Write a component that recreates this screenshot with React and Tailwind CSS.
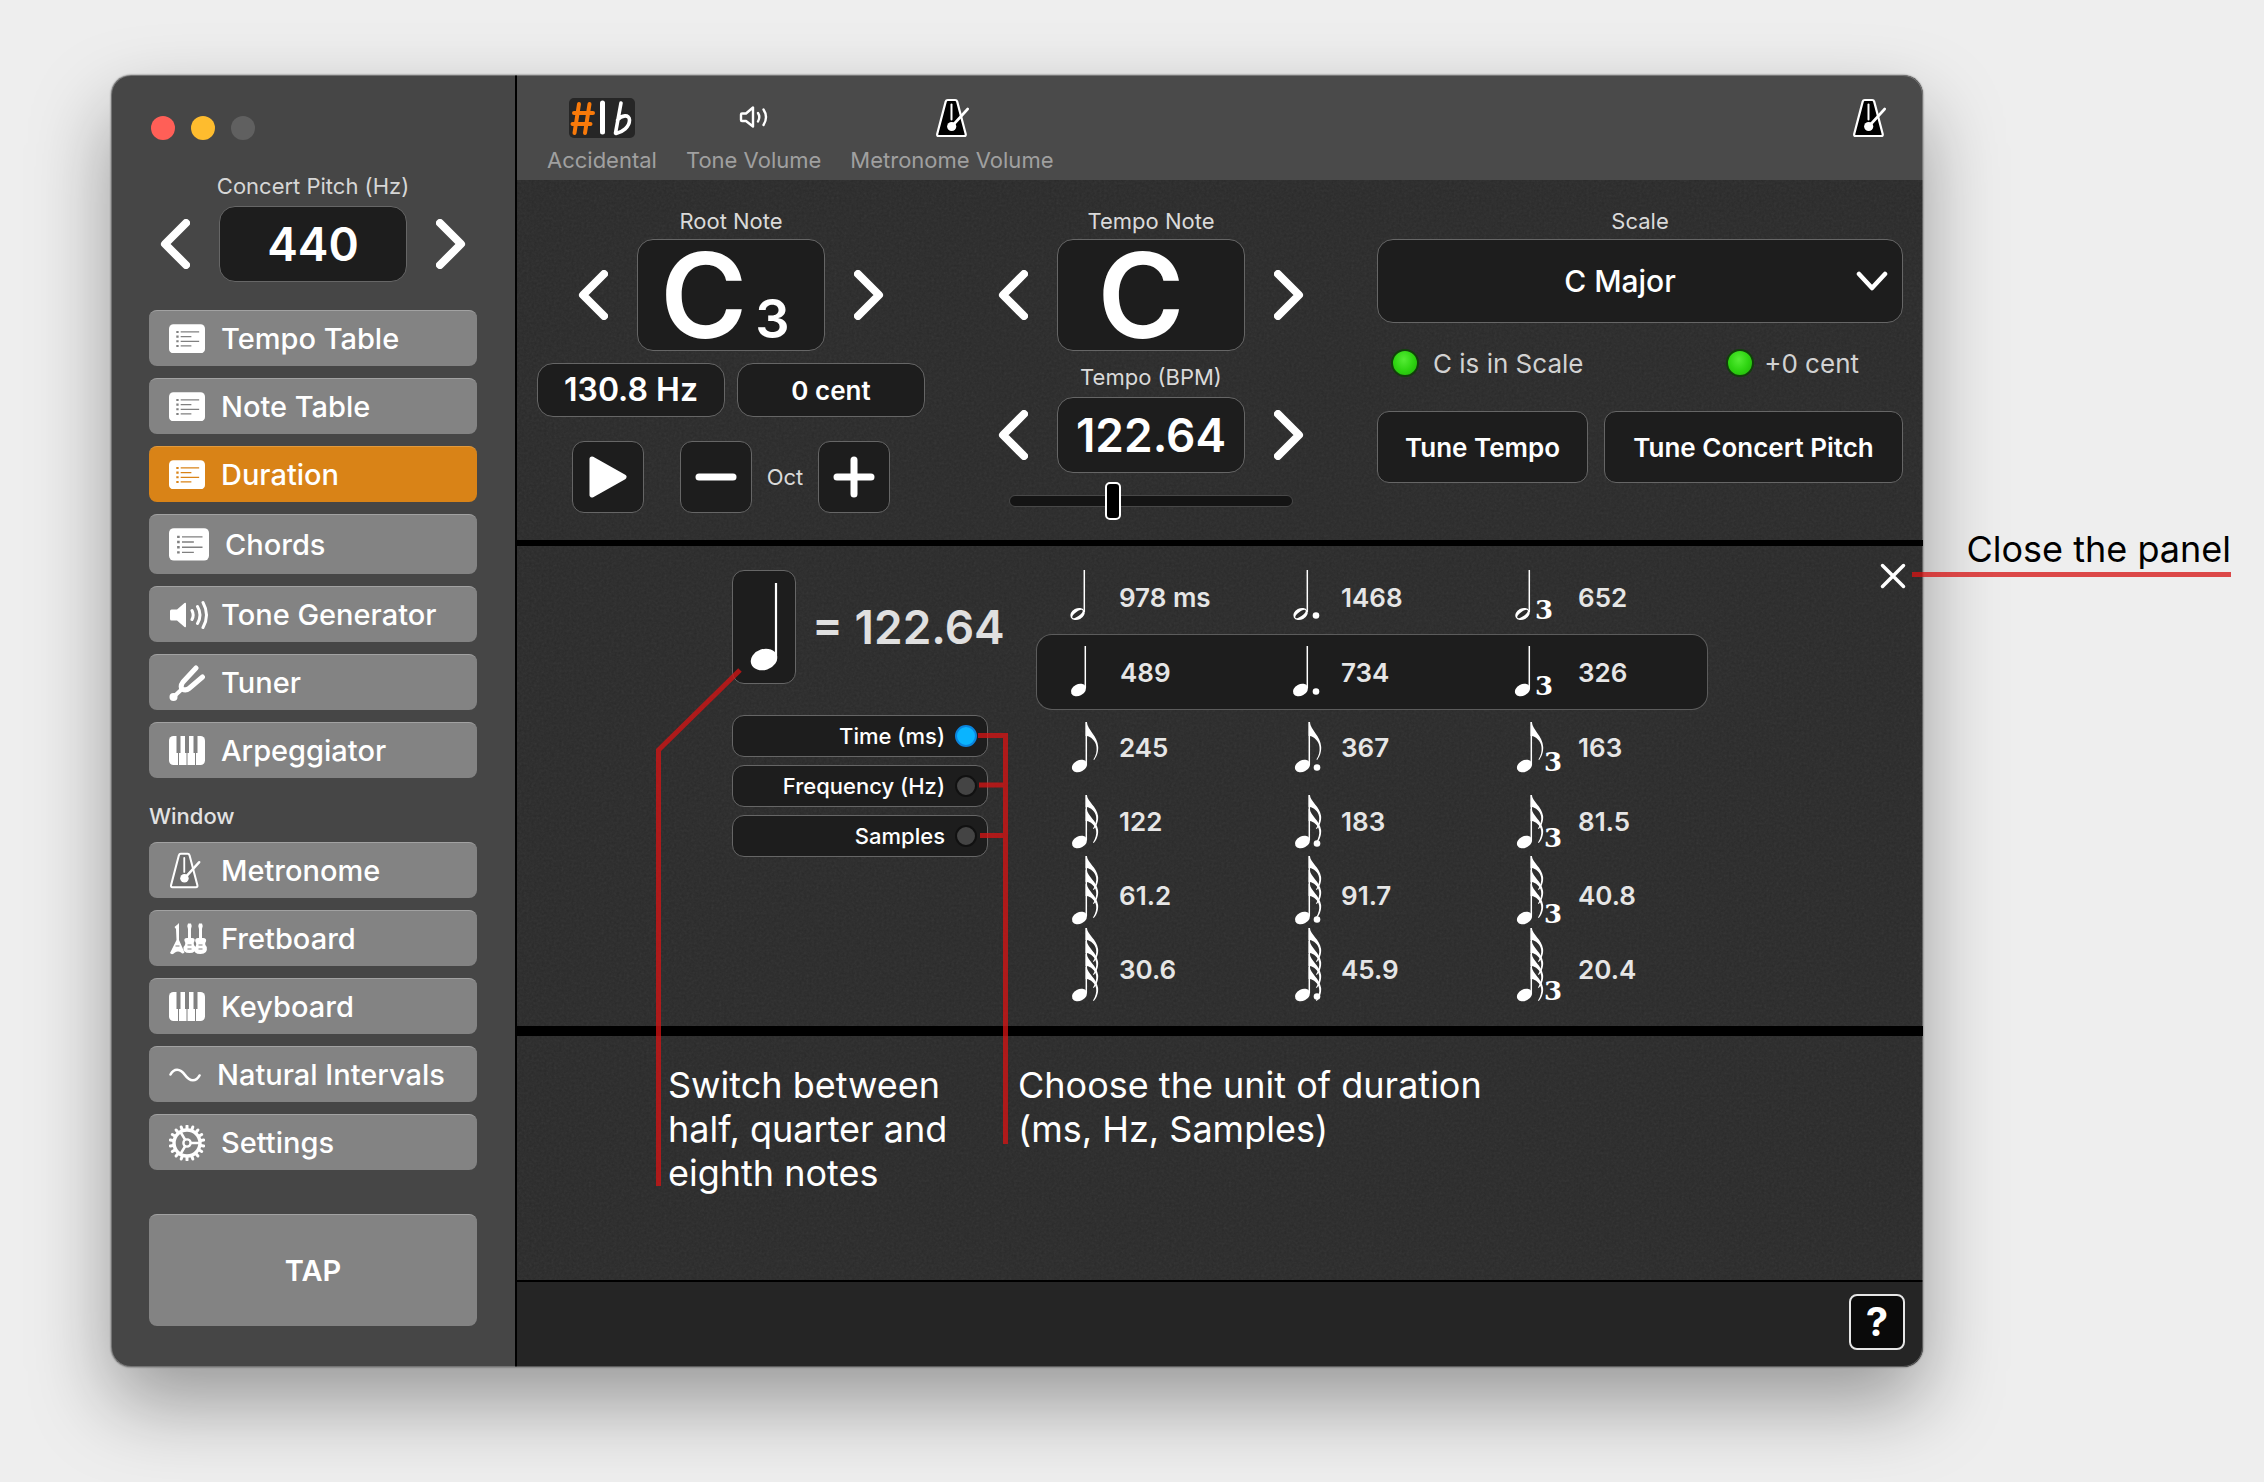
import { useState } from 'react';

const BOX = 'border border-[#666] bg-[#1d1d1d] text-white';

function Chevron({ dir, label }) {
  return (
    <button aria-label={label} className="shrink-0">
      <svg width="30" height="50" viewBox="0 0 30 50" fill="none" stroke="#fff" strokeWidth="8" strokeLinecap="round" strokeLinejoin="round">
        <path d={dir === 'left' ? 'M26 4 5 25 26 46' : 'M4 4 25 25 4 46'} />
      </svg>
    </button>
  );
}

function ListIcon({ size = 36, line = '#808080' }) {
  return (
    <svg width={size} height={size * 0.82} viewBox="0 0 37 30" fill="none">
      <rect width="37" height="30" rx="4.5" fill="#fff" />
      <g stroke={line} strokeWidth="1.3">
        <path d="M12 8h19M12 12.8h11M12 17.6h19M12 22.4h11" />
        <path strokeWidth="2.2" d="M7.5 8h2.4M7.5 12.8h2.4M7.5 17.6h2.4M7.5 22.4h2.4" />
      </g>
    </svg>
  );
}

function SpeakerIcon() {
  return (
    <svg width="40" height="30" viewBox="0 0 40 30" fill="none" stroke="#fff" strokeWidth="3" strokeLinecap="round">
      <path d="M1 11q0-1.500 1.500-1.500H8L15.500 3q1.500-1 1.500.8v22.400q0 1.800-1.500.8L8 20.500H2.500Q1 20.500 1 19Z" fill="#fff" stroke="none" />
      <path d="M23 10.500q2.400 4.500 0 9M28.500 6.500q5 8.500 0 17M34 2.500q7 12.500 0 25" />
    </svg>
  );
}

function ForkIcon() {
  return (
    <svg width="36" height="38" viewBox="0 0 36 38" fill="none" stroke="#fff" strokeWidth="5" strokeLinecap="round" strokeLinejoin="round">
      <path d="M27 4 14 18q-3 4-1 7 4 2 7-.5L33.500 13" />
      <path d="M12.500 25.500 5 32.500" strokeWidth="4" />
      <circle cx="4.500" cy="33" r="4" fill="#fff" stroke="none" />
    </svg>
  );
}

function PianoIcon() {
  return (
    <svg width="36" height="29" viewBox="0 0 36 29">
      <rect width="36" height="29" rx="4.500" fill="#fff" />
      <path d="M7.500 0h4v17h-4zM16 0h4v17h-4zM24.500 0h4v17h-4z" fill="#808080" />
      <path d="M9.500 16v13M18 16v13M26.500 16v13" stroke="#808080" strokeWidth="1" />
    </svg>
  );
}

function MetronomeIcon({ fill = '#000', size = 40 }) {
  return (
    <svg width={size * 0.86} height={size} viewBox="0 0 34 40" fill="none" stroke="#fff" strokeLinecap="round" strokeLinejoin="round">
      <path d="M12.500 2h7.500q1.500 0 2 1.600L30.500 36q.5 2-1.500 2H3.500q-2 0-1.500-2L10.500 3.600Q11 2 12.500 2Z" fill={fill} strokeWidth="2.200" />
      <path d="M16.300 6.500v15" strokeWidth="2" />
      <path d="M16.500 28.500 32.500 11" strokeWidth="2.600" />
      <circle cx="16.500" cy="28.500" r="4.600" fill="#fff" stroke="none" />
    </svg>
  );
}

function GuitarsIcon() {
  return (
    <svg width="40" height="32" viewBox="0 0 39 32" fill="#fff">
      <path d="M7 17 6.500 6 5 4 8 1.500 9.500 0v17l5.500 12.500q-2 2-3.500 0-3-2-6 0-3 3-5 .5Z" />
      <path d="M18.500 15V6q-1.500-3 0-5.500h3Q23 3 21.500 6v9q4.500-.5 3.500 3-2 3 1 6 1 6-6 6t-6-6q3-3 1-6-1-3.500 3.500-3Z" />
      <path d="M29.500 15V6Q28 3 29.500.5h3Q34 3 32.500 6v9q5-.5 4 3.500-2 2.500.8 5.500 1.200 7-6.300 7t-6-6q3-3.500.8-6.500Q25 14.500 29.500 15Z" />
      <path d="M6 23h4M18 22h4M29 22h4M18 26h4M29 26h4" stroke="#808080" strokeWidth="1.200" />
    </svg>
  );
}

function TildeIcon() {
  return (
    <svg width="32" height="20" viewBox="0 0 32 20" fill="none" stroke="#fff" strokeWidth="2.600" strokeLinecap="round">
      <path d="M1.500 9.500C5 3 11 3 16 10s11 7 14.500.5" />
    </svg>
  );
}

function GearIcon() {
  const teeth = Array.from({ length: 18 }, (_, i) => i * 20);
  return (
    <svg width="36" height="36" viewBox="-18 -18 36 36" fill="none" stroke="#fff">
      {teeth.map(a => <path key={a} d="M0-14v-3" strokeWidth="3" strokeLinecap="round" transform={`rotate(${a})`} />)}
      <circle r="13" strokeWidth="3.400" />
      <circle r="3.600" strokeWidth="2.400" />
      <path d="M3.600 0H12.500M-1.800-3.200-6.500-11M-1.800 3.200-6.500 11" strokeWidth="2.600" />
    </svg>
  );
}

function AccidentalIcon() {
  return (
    <svg width="66" height="40" viewBox="0 0 66 40" fill="none" strokeLinecap="round">
      <rect width="66" height="40" rx="5" fill="#262626" />
      <path d="M10 6 5.500 35M20.500 6 16 35M5 15h19M3.500 26h18" stroke="#f97a0a" strokeWidth="4" />
      <path d="M33.500 5v29" stroke="#fff" strokeWidth="5" />
      <path d="M52 5 46.500 35M48.500 22c4-5 12-6 12 0 0 7-7 12-13.500 13.500" stroke="#fff" strokeWidth="3.600" strokeLinejoin="round" />
    </svg>
  );
}

function NoteHead({ half }) {
  return half ? (
    <g transform="translate(7.500 -7) rotate(-28)">
      <ellipse rx="7.600" ry="5.600" fill="#fff" />
      <ellipse rx="6.300" ry="2.300" fill="#2d2d2d" transform="rotate(-8)" />
    </g>
  ) : <ellipse rx="8" ry="5.800" fill="#fff" transform="translate(7.500 -7) rotate(-28)" />;
}

// stem length by number of flags
const STEMS = [51, 51, 54, 69, 74];

// origin of the drawing is the lower left corner of the note head
function Note({ flags = 0, half, kind, drop }) {
  const stem = STEMS[flags];
  const gap = flags === 4 ? 13 : 14;
  return (
    <svg width="40" height="74" viewBox="0 0 40 74" className="overflow-visible">
      <g transform={`translate(${flags ? 2 : 0} ${37 + drop})`}>
        <NoteHead half={half} />
        <path d={`M14.300-9V-${stem}`} stroke="#fff" strokeWidth="1.500" />
        {flags === 1 && (
          <path transform={`translate(13.600 -${stem})`} fill="#fff" d="M0 0h1.200C2 8 12 14 12.600 25c.2 6-2 10-4 13l-.8-.5c2.600-4 3.600-8 3.100-12.500C10.500 19 5 14.500 1 14H0Z" />
        )}
        {flags > 1 && Array.from({ length: flags }, (_, i) => (
          <path key={i} transform={`translate(13.600 ${i * gap - stem})`} fill="#fff"
            d="M0 0h1.200C2 7 11 11 12.500 21c.5 5-1.500 10-4.300 13l-.8-.5c2.500-4 3.800-8.500 3.100-12C9.500 16 5 12.500 1 12H0Z" />
        ))}
        {kind === 'dot' && <circle cx={flags ? 22 : 23} cy="-5.500" r="3.300" fill="#fff" />}
        {kind === 'triplet' && (
          <text x={flags ? 27 : 20} y="-2" fill="#fff" className="font-['DejaVu_Serif',serif] text-[26px] font-bold">3</text>
        )}
      </g>
    </svg>
  );
}

const TOOLS = [
  { label: 'Tempo Table', icon: <ListIcon /> },
  { label: 'Note Table', icon: <ListIcon /> },
  { label: 'Duration', icon: <ListIcon line="#d98317" />, active: true },
  { label: 'Chords', icon: <ListIcon size={40} />, tall: true },
  { label: 'Tone Generator', icon: <SpeakerIcon />, tight: true },
  { label: 'Tuner', icon: <ForkIcon /> },
  { label: 'Arpeggiator', icon: <PianoIcon /> },
];

const WINDOWS = [
  { label: 'Metronome', icon: <span className="w-9"><MetronomeIcon fill="#6e6e6e" size={37} /></span> },
  { label: 'Fretboard', icon: <GuitarsIcon />, tight: true },
  { label: 'Keyboard', icon: <PianoIcon /> },
  { label: 'Natural Intervals', icon: <TildeIcon /> },
  { label: 'Settings', icon: <GearIcon /> },
];

const ROWS = [
  { half: true, flags: 0, drop: 24, values: ['978 ms', '1468', '652'] },
  { flags: 0, drop: 25, values: ['489', '734', '326'], active: true },
  { flags: 1, drop: 26, values: ['245', '367', '163'] },
  { flags: 2, drop: 28, values: ['122', '183', '81.5'] },
  { flags: 3, drop: 30, values: ['61.2', '91.7', '40.8'] },
  { flags: 4, drop: 33, values: ['30.6', '45.9', '20.4'] },
];

const COLUMNS = [
  { kind: 'plain', cell: 'w-[222px] pl-[34px]', icon: 'w-[49px]' },
  { kind: 'dot', cell: 'w-[222px]', icon: 'w-12' },
  { kind: 'triplet', cell: 'w-48', icon: 'w-[63px]' },
];

const UNITS = ['Time (ms)', 'Frequency (Hz)', 'Samples'];

function NavList({ items }) {
  return (
    <nav className="flex flex-col gap-3">
      {items.map(({ label, icon, active, tall, tight }) => (
        <button key={label}
          className={`flex items-center rounded-lg border-t pl-5 text-left text-[29px] font-medium text-white ${tight ? 'gap-3' : 'gap-4'} ${tall ? 'h-15' : 'h-14'} ${active ? 'border-[#e39a3c] bg-[#d98317]' : 'border-[#a2a2a2] bg-[#838383]'}`}>
          {icon}
          {label}
        </button>
      ))}
    </nav>
  );
}

function Sidebar() {
  return (
    <aside className="flex w-[406px] shrink-0 flex-col rounded-l-[20px] border-r-2 border-black bg-[#464646] px-[38px] pt-[41px] pb-[41px]">
      <div className="flex gap-4 pl-0.5">
        <button aria-label="Close window" className="size-6 rounded-full bg-[#ff5f57]" />
        <button aria-label="Minimize window" className="size-6 rounded-full bg-[#febc2e]" />
        <button aria-label="Zoom window" className="size-6 rounded-full bg-[#606060]" />
      </div>
      <label htmlFor="pitch" className="mt-8 text-center text-[22px] leading-7 text-[#d6d6d6]">Concert Pitch (Hz)</label>
      <div className="mt-1.5 mb-7 flex items-center justify-center gap-[29px]">
        <Chevron dir="left" label="Lower pitch" />
        <input id="pitch" defaultValue="440" className={`${BOX} h-[76px] w-[188px] rounded-2xl text-center text-[46px] font-semibold`} />
        <Chevron dir="right" label="Raise pitch" />
      </div>
      <NavList items={TOOLS} />
      <h2 className="mt-6 mb-3 text-[22px] leading-7 font-medium text-[#e2e2e2]">Window</h2>
      <NavList items={WINDOWS} />
      <button className="mt-11 h-28 rounded-lg border-t border-[#a2a2a2] bg-[#838383] text-[29px] font-semibold text-white">TAP</button>
    </aside>
  );
}

function Toolbar() {
  return (
    <header className="flex h-[105px] items-start gap-[29px] rounded-tr-[20px] bg-[#4a4a4a] pt-[23px] pr-[37px] pl-[30px] text-[22px] leading-7 text-[#a0a0a0]">
      <button className="flex flex-col items-center gap-2"><AccidentalIcon />Accidental</button>
      <button className="flex flex-col items-center gap-2">
        <span className="flex h-10 items-center">
          <svg width="30" height="26" viewBox="0 0 30 26" fill="none" stroke="#fff" strokeWidth="2.400" strokeLinecap="round" strokeLinejoin="round">
            <path d="M2 9.500q0-1 1-1H7L14 2.500v19L7 16H3q-1 0-1-1Z" />
            <path d="M19 8q2.600 4 0 8.500M24.500 4.500q5 7.500 0 15.500" />
          </svg>
        </span>
        Tone Volume
      </button>
      <button className="flex flex-col items-center gap-2"><MetronomeIcon />Metronome Volume</button>
      <button aria-label="Metronome" className="ml-auto"><MetronomeIcon /></button>
    </header>
  );
}

function Led() {
  return <span className="size-7 rounded-full border-2 border-[#123f0c] bg-radial-[at_45%_35%] from-[#55ec35] via-[#2fd512] to-[#1fae08]" />;
}

function Controls() {
  const label = 'text-center text-[22px] leading-7 text-[#dadada]';
  return (
    <section className="flex gap-[73px] px-5 pt-[27px] pb-[19px]">
      <div className="flex w-[388px] flex-col">
        <span className={label}>Root Note</span>
        <div className="mt-1 flex items-center justify-center gap-[29px]">
          <Chevron dir="left" label="Previous root note" />
          <div className={`${BOX} flex h-28 w-[188px] items-baseline justify-center gap-2 rounded-2xl pr-3 font-semibold`}>
            <span className="text-[118px] leading-[110px]">C</span>
            <span className="text-[54px]">3</span>
          </div>
          <Chevron dir="right" label="Next root note" />
        </div>
        <div className="mt-3 flex gap-3 font-semibold">
          <div className={`${BOX} flex h-[54px] flex-1 items-center justify-center rounded-2xl text-[32px]`}>130.8 Hz</div>
          <div className={`${BOX} flex h-[54px] flex-1 items-center justify-center rounded-2xl text-[26px]`}>0 cent</div>
        </div>
        <div className="mt-6 flex items-center justify-center gap-9">
          <button aria-label="Play" className={`${BOX} flex size-18 items-center justify-center rounded-xl`}>
            <svg width="40" height="44" viewBox="0 0 40 44"><path d="M4 4 36 22 4 40Z" fill="#fff" stroke="#fff" strokeWidth="5" strokeLinejoin="round" /></svg>
          </button>
          <div className="flex items-center">
            <button aria-label="Octave down" className={`${BOX} flex size-18 items-center justify-center rounded-xl`}>
              <svg width="42" height="42" stroke="#fff" strokeWidth="7" strokeLinecap="round"><path d="M4 21H38" /></svg>
            </button>
            <span className={`${label} w-[66px]`}>Oct</span>
            <button aria-label="Octave up" className={`${BOX} flex size-18 items-center justify-center rounded-xl`}>
              <svg width="42" height="42" stroke="#fff" strokeWidth="7" strokeLinecap="round"><path d="M4 21H38M21 4V38" /></svg>
            </button>
          </div>
        </div>
      </div>

      <div className="flex w-[306px] flex-col">
        <span className={label}>Tempo Note</span>
        <div className="mt-1 flex items-center justify-between">
          <Chevron dir="left" label="Previous tempo note" />
          <div className={`${BOX} flex h-28 w-[188px] justify-center rounded-2xl pr-5 text-[118px] leading-[110px] font-semibold`}>C</div>
          <Chevron dir="right" label="Next tempo note" />
        </div>
        <label htmlFor="tempo" className={`${label} mt-3`}>Tempo (BPM)</label>
        <div className="mt-1.5 flex items-center justify-between">
          <Chevron dir="left" label="Slower" />
          <input id="tempo" defaultValue="122.64" className={`${BOX} h-[76px] w-[188px] rounded-2xl text-center text-[46px] font-semibold`} />
          <Chevron dir="right" label="Faster" />
        </div>
        <input type="range" aria-label="Tempo" min="0" max="1000" defaultValue="358"
          className="mt-2 h-10 w-[284px] appearance-none self-center bg-transparent [&::-webkit-slider-runnable-track]:h-3 [&::-webkit-slider-runnable-track]:rounded-full [&::-webkit-slider-runnable-track]:border [&::-webkit-slider-runnable-track]:border-[#484848] [&::-webkit-slider-runnable-track]:bg-[#141414] [&::-webkit-slider-thumb]:-mt-[14px] [&::-webkit-slider-thumb]:h-[38px] [&::-webkit-slider-thumb]:w-4 [&::-webkit-slider-thumb]:appearance-none [&::-webkit-slider-thumb]:rounded-[5px] [&::-webkit-slider-thumb]:border-2 [&::-webkit-slider-thumb]:border-white [&::-webkit-slider-thumb]:bg-black" />
      </div>

      <div className="flex flex-1 flex-col">
        <label htmlFor="scale" className={label}>Scale</label>
        <div className="relative mt-1">
          <select id="scale" className={`${BOX} h-[84px] w-full appearance-none rounded-2xl pr-10 text-center text-[30px] font-medium`}>
            <option>C Major</option>
          </select>
          <svg className="pointer-events-none absolute top-8 right-3.5" width="34" height="22" viewBox="0 0 34 22" fill="none" stroke="#fff" strokeWidth="4.500" strokeLinecap="round" strokeLinejoin="round"><path d="M4 3 17 17 30 3" /></svg>
        </div>
        <div className="mt-6 flex h-8 items-center justify-between pr-11 pl-3.5 text-[26px] text-[#d2d2d2]">
          <span className="flex items-center gap-3.5"><Led />C is in Scale</span>
          <span className="flex items-center gap-2.5"><Led />+0 cent</span>
        </div>
        <div className="mt-8 flex gap-4 text-[26px] font-semibold">
          <button className={`${BOX} h-18 w-[211px] rounded-xl`}>Tune Tempo</button>
          <button className={`${BOX} h-18 flex-1 rounded-xl`}>Tune Concert Pitch</button>
        </div>
      </div>
    </section>
  );
}

function DurationTable() {
  return (
    <table className="border-separate border-spacing-0 text-[26px] font-semibold text-[#e6e6e6]">
      <tbody>
        {ROWS.map(row => (
          <tr key={row.values[0]}>
            {COLUMNS.map((col, i) => (
              <td key={col.kind}
                className={`p-0 ${row.active ? 'border-y border-[#5c5c5c] bg-[#1d1d1d]' : ''} ${row.active && i === 0 ? 'rounded-l-2xl border-l' : ''} ${row.active && i === 2 ? 'rounded-r-2xl border-r' : ''}`}>
                <div className={`flex h-[74px] items-center box-content ${col.cell}`}>
                  <span className={`shrink-0 ${col.icon}`}>
                    <Note flags={row.flags} half={row.half} kind={col.kind} drop={row.drop} />
                  </span>
                  {row.values[i]}
                </div>
              </td>
            ))}
          </tr>
        ))}
      </tbody>
    </table>
  );
}

function Duration() {
  const [unit, setUnit] = useState(UNITS[0]);
  return (
    <section className="relative z-10 flex justify-center border-t-6 border-b-10 border-black pt-3.5 pb-5">
      <div className="relative flex gap-12">
        <div className="w-64 pt-2.5">
          <div className="flex items-center gap-4">
            <button aria-label="Switch note" className={`${BOX} flex h-[114px] w-16 shrink-0 items-center justify-center rounded-xl`}>
              <svg width="28" height="90" viewBox="0 0 28 90">
                <ellipse cx="14" cy="77.500" rx="13.500" ry="10.500" transform="rotate(-18 14 77.500)" fill="#fff" />
                <path d="M26 1v74" stroke="#fff" strokeWidth="2.200" />
              </svg>
            </button>
            <span className="text-[46px] font-semibold whitespace-nowrap text-[#e0e0e0]">= 122.64</span>
          </div>
          <div role="radiogroup" aria-label="Unit" className="mt-[31px] flex flex-col gap-2">
            {UNITS.map(name => (
              <label key={name} className={`${BOX} flex h-[42px] items-center justify-end gap-2.5 rounded-xl pr-2.5 text-[22px] font-medium`}>
                {name}
                <input type="radio" name="unit" checked={unit === name} onChange={() => setUnit(name)}
                  className="size-[22px] appearance-none rounded-full border-2 border-[#111] bg-[#444] checked:border-[#0b84dd] checked:bg-[#0ab4ff]" />
              </label>
            ))}
          </div>
        </div>
        <DurationTable />

        <svg className="pointer-events-none absolute top-0 left-0 overflow-visible" width="1" height="1" fill="none" stroke="#d61414" strokeWidth="5" opacity="0.760">
          <path d="M8 110-73.500 190V626M246 175.500H273.500V584M247 225H271M248 275.500H271" />
        </svg>
        <p className="absolute top-[503px] -left-16 w-[300px] text-4xl leading-11 text-white">Switch between half, quarter and eighth notes</p>
        <p className="absolute top-[503px] left-[286px] text-4xl leading-11 whitespace-nowrap text-white">Choose the unit of duration<br />(ms, Hz, Samples)</p>
      </div>

      <button aria-label="Close the panel" className="absolute top-4 right-4">
        <svg width="28" height="28" stroke="#fff" strokeWidth="3.500" strokeLinecap="round"><path d="M3.500 3.500 24.500 24.500M24.500 3.500 3.500 24.500" /></svg>
      </button>
      <p className="absolute -top-5 left-[calc(100%-11px)] w-[319px] border-b-5 border-[#d61414]/76 text-right text-4xl leading-[46px] text-black">Close the panel</p>
    </section>
  );
}

export default function App() {
  return (
    <div className="min-h-screen bg-[#eeeeee] pt-[75px] pr-[341px] pb-[115px] pl-[111px] font-['Inter',sans-serif]">
      <div className="relative flex rounded-[20px] shadow-[0_36px_80px_rgba(0,0,0,0.36),0_0_2px_rgba(0,0,0,0.6)]">
        <Sidebar />
        <main className="relative flex min-w-0 flex-1 flex-col rounded-r-[20px] bg-[#2a2a2a]">
          <svg className="pointer-events-none absolute inset-0 h-full w-full rounded-r-[20px] opacity-8">
            <filter id="grain">
              <feTurbulence type="fractalNoise" baseFrequency="0.4" numOctaves="3" />
              <feColorMatrix type="saturate" values="0" />
            </filter>
            <rect width="100%" height="100%" filter="url(#grain)" />
          </svg>
          <div className="relative flex flex-1 flex-col">
            <Toolbar />
            <Controls />
            <Duration />
            <div className="flex-1" />
            <footer className="flex h-[87px] justify-end rounded-br-[20px] border-t-2 border-black bg-[#252525] pt-3 pr-[18px]">
              <button aria-label="Help" className="flex size-14 items-center justify-center rounded-lg border-2 border-[#e6e6e6] bg-[#0a0a0a] text-[40px] font-bold text-white">?</button>
            </footer>
          </div>
        </main>
        <div className="pointer-events-none absolute inset-0 rounded-[20px] border border-white/25" />
      </div>
    </div>
  );
}
